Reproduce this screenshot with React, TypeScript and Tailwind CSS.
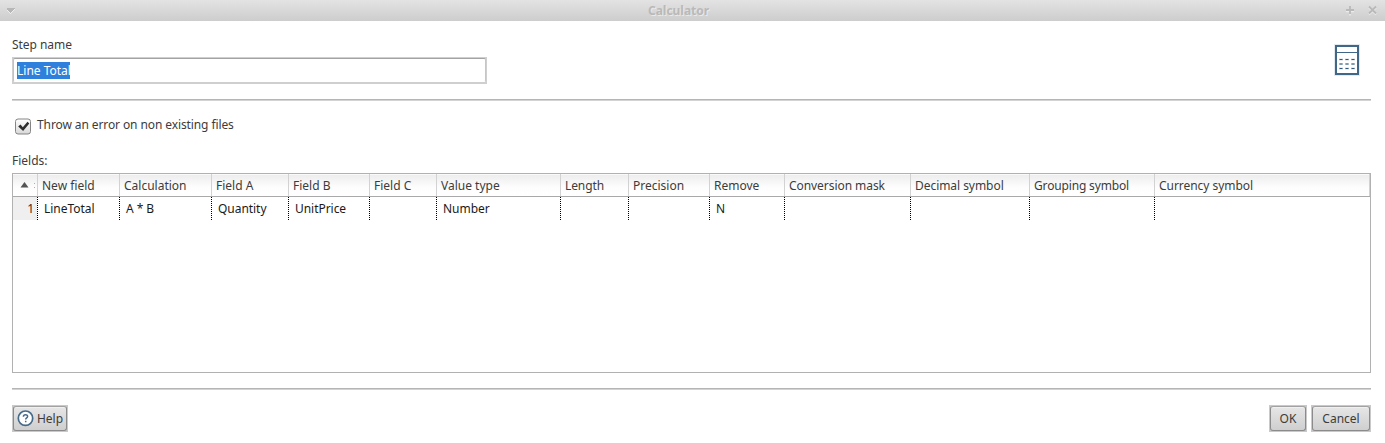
import React from "react";

type Column = { label: string; value: string; width: string; labelStyle: string };

const columns: Column[] = [
  { label: "New field", value: "LineTotal", width: "w-[82px]", labelStyle: "" },
  { label: "Calculation", value: "A * B", width: "w-[92px]", labelStyle: "" },
  { label: "Field A", value: "Quantity", width: "w-[77px]", labelStyle: "" },
  { label: "Field B", value: "UnitPrice", width: "w-[81px]", labelStyle: "" },
  { label: "Field C", value: "", width: "w-[67px]", labelStyle: "" },
  { label: "Value type", value: "Number", width: "w-[124px]", labelStyle: "" },
  { label: "Length", value: "", width: "w-[68px]", labelStyle: "tracking-[-0.1px]" },
  { label: "Precision", value: "", width: "w-[81px]", labelStyle: "" },
  { label: "Remove", value: "N", width: "w-[75px]", labelStyle: "" },
  { label: "Conversion mask", value: "", width: "w-[126px]", labelStyle: "tracking-[-0.06px]" },
  { label: "Decimal symbol", value: "", width: "w-[119px]", labelStyle: "tracking-[-0.05px]" },
  { label: "Grouping symbol", value: "", width: "w-[125px]", labelStyle: "tracking-[-0.16px]" },
  { label: "Currency symbol", value: "", width: "w-[215px]", labelStyle: "tracking-[-0.04px]" },
];

function TitleBar() {
  return (
    <header className="flex h-[21px] shrink-0 items-center bg-linear-to-b from-[#e3e3e3] to-[#cdcdcd] pl-[6px] pr-[7px]">
      <svg width="60" height="21" viewBox="0 0 60 21" shapeRendering="crispEdges">
        <path d="M1 9h8v1h-1v1h-1v1h-1v1h-1v1h-1v-1h-1v-1h-1v-1h-1v-1z" fill="#efefef" />
        <path d="M1 8h8v1h-1v1h-1v1h-1v1h-1v1h-1v-1h-1v-1h-1v-1h-1z" fill="#b7b7b7" />
      </svg>
      <h1 className="ml-[582px] text-[12px] leading-[21px] font-bold tracking-[-0.02px] text-[#b9b9b9] [text-shadow:1px_1px_0_#e9e9e9]">
        Calculator
      </h1>
      <svg width="70" height="21" viewBox="0 0 70 21" fill="none" className="ml-auto">
        <path d="M38 11.5h8M42 7.5v8" stroke="#ececec" strokeWidth="1.6" />
        <path d="M38 10h8M42 6v8" stroke="#b9b9b9" strokeWidth="1.8" />
        <path d="M61 7.5l7 7m0-7l-7 7" stroke="#ececec" strokeWidth="1.8" />
        <path d="M61 6.5l7 7m0-7l-7 7" stroke="#b9b9b9" strokeWidth="1.8" />
      </svg>
    </header>
  );
}

function CalculatorIcon() {
  return (
    <svg width="26" height="32" viewBox="0 0 26 32" className="mt-[23px] mr-[11px]" fill="none">
      <rect x="0.5" y="0.5" width="25" height="31" stroke="#e3eaf0" />
      <rect x="2" y="2" width="22" height="28" stroke="#416788" strokeWidth="2" />
      <path d="M2 8.5h22" stroke="#416788" />
      <path
        d="M5 15.5h4M11 15.5h4M17 15.5h4M5 20h4M11 20h4M17 20h4M5 24.5h4M11 24.5h4M17 24.5h4"
        stroke="#d3dee7"
        strokeWidth="2"
      />
      <path
        d="M5.5 15.5h3M11.5 15.5h3M17.5 15.5h3M5.5 20h3M11.5 20h3M17.5 20h3M5.5 24.5h3M11.5 24.5h3M17.5 24.5h3"
        stroke="#2f587b"
        strokeWidth="1"
      />
    </svg>
  );
}

function Divider() {
  return <div className="h-[2px] shrink-0 border-t border-t-[#b5b5b5] bg-[#d3d3d3]" />;
}

function Button({ children, className }: { children: React.ReactNode; className: string }) {
  return (
    <div className={`h-[27px] bg-[#c9c9c9] p-px ${className}`}>
      <button className="flex h-[25px] w-full items-center justify-center rounded-[3px] border border-[#8b8b8b] border-t-[#a2a2a2] bg-linear-to-b from-[#e6e6e6] to-[#cfcfcf] text-[#3c3c3c] shadow-[inset_0_1px_0_#f0f0f0]">
        {children}
      </button>
    </div>
  );
}

function FieldsTable() {
  return (
    <div className="mt-[4px] h-[200px] border border-[#b1b1b1] bg-white">
      <div className="flex h-[23px] border-b border-[#a9a9a9] bg-linear-to-b from-[#ececec] via-[#fdfdfd] via-60% to-white shadow-[inset_0_1px_0_#fafafa]">
        <div className="flex w-[24px] shrink-0 items-center pl-[7px]">
          <svg width="16" height="10" viewBox="0 0 16 10">
            <path d="M0.5 7.5L4.5 2l4 5.5z" fill="#555555" />
            <path d="M14 3h1v1h-1zM14 7h1v1h-1z" fill="#e5a269" />
          </svg>
        </div>
        {columns.map((c) => (
          <div
            key={c.label}
            className={`shrink-0 border-l border-[#d2d2d2] pl-[4px] leading-[23px] whitespace-nowrap ${c.width} ${c.labelStyle}`}
          >
            {c.label}
          </div>
        ))}
        <div className="w-px bg-[#d2d2d2]" />
      </div>
      <div className="flex h-[23px] leading-[24px] text-[#1a1a1a]">
        <div className="w-[24px] shrink-0 bg-[#efefef] pr-[3px] text-right text-[#4a2a1c]">1</div>
        {columns.map((c) => (
          <div key={c.label} className={`flex shrink-0 ${c.width}`}>
            <div className="w-px bg-[repeating-linear-gradient(to_bottom,#000_0px,#000_1px,#fff_1px,#fff_2px)]" />
            <span className="pl-[6px] tracking-[-0.04px] whitespace-nowrap">{c.value}</span>
          </div>
        ))}
      </div>
    </div>
  );
}

export default function App() {
  return (
    <div className="flex h-[443px] w-[1385px] flex-col overflow-hidden bg-white font-['Noto_Sans',sans-serif] text-[12px] text-[#3c3c3c]">
      <TitleBar />
      <main className="flex flex-col pr-[14px] pl-[12px]">
        <div className="flex h-[78px] justify-between">
          <div className="pt-[15px]">
            <div className="h-[21px] leading-[17px] tracking-[-0.04px]">Step name</div>
            <div className="h-[27px] w-[475px] border border-b-2 border-[#cfcfcf] bg-[#cfcfcf]">
              <div className="h-[24px] rounded-[2px] border border-t-[#a3a3a3] border-r-[#c6c6c6] border-b-white border-l-[#c2c2c2] bg-white pt-[3px] pl-[3px]">
                <span className="block w-[53px] bg-[#2f80dc] leading-[17px] whitespace-nowrap text-white">Line Total</span>
              </div>
            </div>
          </div>
          <CalculatorIcon />
        </div>
        <Divider />
        <div className="flex h-[51px] pt-[15px] pl-[3px]">
          <svg width="17" height="17" viewBox="0 0 17 17" className="mt-[2px]">
            <defs>
              <linearGradient id="box" x1="0" y1="0" x2="0" y2="1">
                <stop offset="0" stopColor="#ffffff" />
                <stop offset="1" stopColor="#d8d8d8" />
              </linearGradient>
            </defs>
            <rect x="0.5" y="1" width="15" height="15" rx="2.5" fill="url(#box)" stroke="#858585" />
            <path d="M3.2 8.5l2.3-2 2.3 2.7 4.7-5.4 1.8 1.6-6.2 7.5z" fill="#2d2d2d" />
          </svg>
          <span className="ml-[5px] leading-[17px] tracking-[-0.1px]">Throw an error on non existing files</span>
        </div>
        <div className="h-[17px] leading-[17px]">Fields:</div>
        <FieldsTable />
        <div className="h-[15px]" />
        <Divider />
        <div className="flex gap-[4px] pt-[15px]">
          <Button className="w-[56px]">
            <svg width="17" height="17" viewBox="0 0 17 17" className="mr-[3px] shrink-0">
              <circle cx="8.5" cy="8.2" r="7.2" fill="#ffffff" stroke="#456b8b" strokeWidth="1.7" />
              <path d="M6.4 6.7c0-2.8 4.2-2.6 4.2-.3 0 1.5-1.9 1.5-1.9 3M8.7 10.7v1.5" fill="none" stroke="#456b8b" strokeWidth="1.5" />
            </svg>
            Help
          </Button>
          <div className="-mr-[4px] grow" />
          <Button className="w-[38px]">OK</Button>
          <Button className="w-[60px]">Cancel</Button>
        </div>
      </main>
    </div>
  );
}
